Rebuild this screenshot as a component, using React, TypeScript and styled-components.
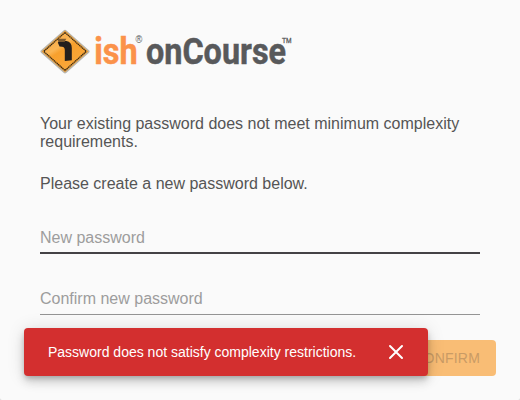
import React from "react";
import styled, { createGlobalStyle } from "styled-components";

const GlobalStyle = createGlobalStyle`
  * { box-sizing: border-box; }
  body {
    margin: 0;
    background: #d8d8d8;
    font-family: "Liberation Sans", Arial, Helvetica, sans-serif;
  }
`;

const Page = styled.main`
  position: relative;
  width: 520px;
  height: 400px;
  padding: 24px 24px 24px 40px;
  overflow: hidden;
  background: #fafafa;
  border-radius: 0 0 2px 2px;
`;

const Logo = styled.svg`
  display: block;
  width: 256px;
  height: 56px;
`;

const Message = styled.p<{ $gap: number }>`
  margin: ${({ $gap }) => $gap}px 0 0;
  width: 440px;
  font-size: 16px;
  line-height: 18px;
  color: #555;
`;

const Field = styled.input<{ $active?: boolean }>`
  display: block;
  width: 440px;
  height: ${({ $active }) => ($active ? 33 : 32)}px;
  margin: 0;
  padding: ${({ $active }) => ($active ? "2px 0 0" : "0")};
  border: 0;
  border-bottom: ${({ $active }) => ($active ? "2px solid #444245" : "1px solid #949494")};
  border-radius: 0;
  outline: 0;
  background: transparent;
  font: 16px "Liberation Sans", Arial, sans-serif;
  color: #444;

  &::placeholder {
    color: #9d9d9d;
    opacity: 1;
  }
`;

const Form = styled.form`
  display: flex;
  flex-direction: column;
  gap: 29px;
  margin-top: 28px;
`;

const Actions = styled.div`
  display: flex;
  justify-content: flex-end;
  margin-top: -4px;
`;

const ConfirmButton = styled.button`
  height: 36px;
  padding: 0 16px;
  border: 0;
  border-radius: 4px;
  background: #f9bd75;
  font: 14px "Liberation Sans", Arial, sans-serif;
  letter-spacing: 0.2px;
  color: #c99b65;
`;

const Snackbar = styled.div`
  position: absolute;
  left: 24px;
  bottom: 24px;
  display: flex;
  align-items: center;
  justify-content: space-between;
  width: 404px;
  height: 48px;
  padding: 0 20px 0 24px;
  border-radius: 4px;
  background: #d32f2f;
  box-shadow:
    0 3px 5px -1px rgba(0, 0, 0, 0.2),
    0 6px 10px 0 rgba(0, 0, 0, 0.14),
    0 1px 18px 0 rgba(0, 0, 0, 0.12);
  color: #fff;
  font-size: 14px;
  white-space: nowrap;
`;

const CloseButton = styled.button`
  display: flex;
  padding: 0;
  border: 0;
  background: none;
  color: inherit;
`;

function OnCourseLogo() {
  return (
    <Logo viewBox="40 24 256 56" role="img" aria-label="ish onCourse">
      <defs>
        <linearGradient id="sign" x1="0" y1="0" x2="0.7" y2="1">
          <stop offset="0" stopColor="#f7a23a" />
          <stop offset="0.42" stopColor="#fbb655" />
          <stop offset="0.52" stopColor="#f8a02d" />
          <stop offset="1" stopColor="#f9a83c" />
        </linearGradient>
      </defs>
      <path d="M63.5 30.4Q65 29 66.5 30.4L89 50.3Q90.2 51.5 89 52.7L66.5 72.8Q65 74.1 63.5 72.8L41 52.7Q39.8 51.5 41 50.3Z" fill="#b9b6ae" />
      <path d="M65 30.6L88.4 51.4L65 72.2L41.6 51.4Z" fill="#e59b38" />
      <path d="M65 32.6L86.2 51.4L65 70.4L43.8 51.4Z" fill="url(#sign)" stroke="#2f2517" strokeWidth="1.2" strokeDasharray="1.4 0.5" />
      <path d="M57.8 42.6L59.5 41H66.5C70 41.6 71.8 44 71.8 48V60.2L64.8 61V50C64.8 48 64 47 62 46.8L59.5 46.4Z" fill="#241f1d" />
      <path d="M57.5 38.8H66.3L64.6 42H58.5Z" fill="#7c5a30" />
      <g fontFamily="Roboto" fontWeight="700" strokeWidth="0.5">
        <text x="94.2" y="63.6" fontSize="37" textLength="43.5" lengthAdjust="spacingAndGlyphs" fill="#fb924a" stroke="#fb924a">ish</text>
        <text x="146" y="63.6" fontSize="37" textLength="140" lengthAdjust="spacingAndGlyphs" fill="#58595b" stroke="#58595b">onCourse</text>
      </g>
      <g fontFamily="Liberation Sans" fill="#58595b">
        <text x="135.6" y="43.2" fontSize="10" textLength="6.8" lengthAdjust="spacingAndGlyphs">®</text>
        <text x="282" y="43.2" fontSize="7.5" textLength="9.6" lengthAdjust="spacingAndGlyphs" stroke="#58595b" strokeWidth="0.3">TM</text>
      </g>
    </Logo>
  );
}

export default function App() {
  return (
    <>
      <GlobalStyle />
      <Page>
        <OnCourseLogo />
        <Message $gap={35}>
          Your existing password does not meet minimum complexity requirements.
        </Message>
        <Message $gap={24}>Please create a new password below.</Message>
        <Form>
          <Field $active type="password" placeholder="New password" />
          <Field type="password" placeholder="Confirm new password" />
          <Actions>
            <ConfirmButton type="button" disabled>CONFIRM</ConfirmButton>
          </Actions>
        </Form>
        <Snackbar role="alert">
          <span>Password does not satisfy complexity restrictions.</span>
          <CloseButton aria-label="Close">
            <svg width="24" height="24" viewBox="0 0 24 24">
              <path d="M6 6L18 18M18 6L6 18" fill="none" stroke="currentColor" strokeWidth="2" strokeLinecap="round" />
            </svg>
          </CloseButton>
        </Snackbar>
      </Page>
    </>
  );
}
